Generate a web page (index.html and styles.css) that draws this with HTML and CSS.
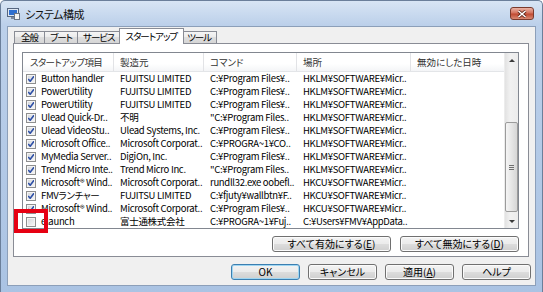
FILE: index.html
```html
<!DOCTYPE html>
<html>
<head>
    <meta charset="utf-8">
    <title>システム構成</title>
    <link rel="stylesheet" href="styles.css">
</head>
<body>
<div class="window">
    <div class="titlebar">
        <svg class="app-icon" width="13" height="12" viewBox="0 0 13 12">
            <rect x="0.5" y="0.5" width="11" height="8" fill="#dfe8f3" stroke="#56667f"/>
            <rect x="2" y="2" width="8" height="5" fill="#2f6fd0"/>
            <rect x="4" y="9" width="4" height="2" fill="#7d8ba0"/>
            <rect x="7.5" y="5.5" width="5" height="6" fill="#f4f4f4" stroke="#6d7685"/>
        </svg>
        <span class="title">システム構成</span>
        <div class="close-btn">
            <svg width="10" height="8" viewBox="0 0 10 8">
                <path d="M1.5 1 L8.5 7 M8.5 1 L1.5 7" stroke="#5a2216" stroke-width="3"/>
                <path d="M1.5 1 L8.5 7 M8.5 1 L1.5 7" stroke="#fff" stroke-width="1.6"/>
            </svg>
        </div>
    </div>

    <div class="client">
        <div class="tabs">
            <div class="tab">全般</div>
            <div class="tab">ブート</div>
            <div class="tab">サービス</div>
            <div class="tab active">スタートアップ</div>
            <div class="tab">ツール</div>
        </div>

        <div class="panel">
            <div class="listview">
                <div class="list-main">
                    <div class="row header">
                        <div class="col">スタートアップ項目</div>
                        <div class="col">製造元</div>
                        <div class="col">コマンド</div>
                        <div class="col">場所</div>
                        <div class="col">無効にした日時</div>
                    </div>
                    <div class="row">
                        <div class="col"><span class="cb on"></span>Button handler</div>
                        <div class="col">FUJITSU LIMITED</div>
                        <div class="col">C:¥Program Files¥..</div>
                        <div class="col">HKLM¥SOFTWARE¥Micr..</div>
                        <div class="col"></div>
                    </div>
                    <div class="row">
                        <div class="col"><span class="cb on"></span>PowerUtility</div>
                        <div class="col">FUJITSU LIMITED</div>
                        <div class="col">C:¥Program Files¥..</div>
                        <div class="col">HKLM¥SOFTWARE¥Micr..</div>
                        <div class="col"></div>
                    </div>
                    <div class="row">
                        <div class="col"><span class="cb on"></span>PowerUtility</div>
                        <div class="col">FUJITSU LIMITED</div>
                        <div class="col">C:¥Program Files¥..</div>
                        <div class="col">HKLM¥SOFTWARE¥Micr..</div>
                        <div class="col"></div>
                    </div>
                    <div class="row">
                        <div class="col"><span class="cb on"></span>Ulead Quick-Dr..</div>
                        <div class="col">不明</div>
                        <div class="col">"C:¥Program Files..</div>
                        <div class="col">HKLM¥SOFTWARE¥Micr..</div>
                        <div class="col"></div>
                    </div>
                    <div class="row">
                        <div class="col"><span class="cb on"></span>Ulead VideoStu..</div>
                        <div class="col">Ulead Systems, Inc.</div>
                        <div class="col">C:¥Program Files¥..</div>
                        <div class="col">HKLM¥SOFTWARE¥Micr..</div>
                        <div class="col"></div>
                    </div>
                    <div class="row">
                        <div class="col"><span class="cb on"></span>Microsoft Office..</div>
                        <div class="col">Microsoft Corporat..</div>
                        <div class="col">C:¥PROGRA~1¥CO..</div>
                        <div class="col">HKLM¥SOFTWARE¥Micr..</div>
                        <div class="col"></div>
                    </div>
                    <div class="row">
                        <div class="col"><span class="cb on"></span>MyMedia Server..</div>
                        <div class="col">DigiOn, Inc.</div>
                        <div class="col">C:¥Program Files¥..</div>
                        <div class="col">HKLM¥SOFTWARE¥Micr..</div>
                        <div class="col"></div>
                    </div>
                    <div class="row">
                        <div class="col"><span class="cb on"></span>Trend Micro Inte..</div>
                        <div class="col">Trend Micro Inc.</div>
                        <div class="col">"C:¥Program Files..</div>
                        <div class="col">HKLM¥SOFTWARE¥Micr..</div>
                        <div class="col"></div>
                    </div>
                    <div class="row">
                        <div class="col"><span class="cb on"></span>Microsoft® Wind..</div>
                        <div class="col">Microsoft Corporat..</div>
                        <div class="col">rundll32.exe oobefl..</div>
                        <div class="col">HKCU¥SOFTWARE¥Micr..</div>
                        <div class="col"></div>
                    </div>
                    <div class="row">
                        <div class="col"><span class="cb on"></span>FMVランチャー</div>
                        <div class="col">FUJITSU LIMITED</div>
                        <div class="col">C:¥fjuty¥wallbtn¥F..</div>
                        <div class="col">HKCU¥SOFTWARE¥Micr..</div>
                        <div class="col"></div>
                    </div>
                    <div class="row">
                        <div class="col"><span class="cb on"></span>Microsoft® Wind..</div>
                        <div class="col">Microsoft Corporat..</div>
                        <div class="col">C:¥Program Files¥..</div>
                        <div class="col">HKCU¥SOFTWARE¥Micr..</div>
                        <div class="col"></div>
                    </div>
                    <div class="row">
                        <div class="col"><span class="cb"></span>elaunch</div>
                        <div class="col">富士通株式会社</div>
                        <div class="col">C:¥PROGRA~1¥Fuj..</div>
                        <div class="col">C:¥Users¥FMV¥AppData..</div>
                        <div class="col"></div>
                    </div>
                </div>
                <div class="vscroll">
                    <div class="sb-btn"><span class="arrow up"></span></div>
                    <div class="sb-track">
                        <div class="sb-thumb"><span class="grip"></span></div>
                    </div>
                    <div class="sb-btn"><span class="arrow down"></span></div>
                </div>
            </div>

            <div class="panel-buttons">
                <button class="btn wide">すべて有効にする(<u>E</u>)</button>
                <button class="btn wide">すべて無効にする(<u>D</u>)</button>
            </div>
        </div>

        <div class="dialog-buttons">
            <button class="btn default">OK</button>
            <button class="btn">キャンセル</button>
            <button class="btn">適用(<u>A</u>)</button>
            <button class="btn">ヘルプ</button>
        </div>
    </div>

    <div class="highlight"></div>
</div>
</body>
</html>
```

FILE: styles.css
```css
body {
    margin: 0;
    font-family: "Noto Sans CJK JP", sans-serif;
    font-size: 9.5px;
    font-feature-settings: "palt";
    color: #000;
}
.window {
    position: relative;
    width: 543px;
    height: 292px;
    box-sizing: border-box;
    border: 1px solid #6b7f9a;
    border-bottom: none;
    border-radius: 5px 5px 0 0;
    background: linear-gradient(#d8e5f4, #bcd0ea 24px, #aac3e3);
    display: flex;
    flex-direction: column;
}
.titlebar {
    height: 25px;
    display: flex;
    align-items: center;
    padding-left: 6px;
}
.app-icon {
    margin-top: 1px;
}
.title {
    margin-left: 5px;
    font-size: 11px;
    letter-spacing: -0.5px;
    color: #111;
}
.close-btn {
    margin-left: auto;
    margin-right: 8px;
    align-self: flex-start;
    margin-top: 6px;
    width: 24px;
    height: 13px;
    box-sizing: border-box;
    border: 1px solid #7a3a2c;
    border-radius: 3px;
    background: linear-gradient(#eab3a5, #d4735e 45%, #c04a32 55%, #d88a74);
    display: flex;
    align-items: center;
    justify-content: center;
}
.client {
    flex: 1;
    margin: 0 6px 6px 6px;
    background: #f0f0f0;
    border: 1px solid #8c9fb9;
    display: flex;
    flex-direction: column;
}
.tabs {
    display: flex;
    align-items: flex-end;
    height: 15px;
    margin-top: 1px;
    padding-left: 6px;
}
.tab {
    height: 11px;
    line-height: 11px;
    padding: 0 5px;
    letter-spacing: -1px;
    border: 1px solid #898c95;
    border-bottom: none;
    margin-left: -1px;
    background: linear-gradient(#f5f5f5, #ebebeb 50%, #dedede 50%, #d6d6d6);
    white-space: nowrap;
}
.tab:first-child {
    margin-left: 0;
    padding: 0 6px;
}
.tab.active {
    position: relative;
    z-index: 1;
    height: 15px;
    line-height: 14px;
    margin: 0 -2px -1px -2px;
    padding: 0 6px;
    background: #fff;
}
.panel {
    height: 214px;
    box-sizing: border-box;
    margin: 0 6px 0 5px;
    border: 1px solid #898c95;
    background: #fff;
    padding: 8px 9px 0 8px;
}
.listview {
    display: flex;
    height: 177px;
    box-sizing: border-box;
    border: 1px solid #828790;
}
.list-main {
    flex: 1;
    min-width: 0;
}
.row {
    display: grid;
    grid-template-columns: 91px 90px 93px 114px 1fr;
    height: 13px;
    line-height: 13px;
    letter-spacing: -0.3px;
}
.col {
    padding-left: 6px;
    white-space: nowrap;
    overflow: hidden;
}
.row .col:first-child {
    padding-left: 3px;
    display: flex;
    align-items: center;
}
.header {
    height: 19px;
    line-height: 18px;
    letter-spacing: 0;
    background: linear-gradient(#fff, #fff 60%, #f4f5f7);
    border-bottom: 1px solid #e3e5e8;
    box-sizing: border-box;
    color: #333;
}
.header .col {
    border-right: 1px solid #e2e3e6;
}
.header .col:first-child {
    padding-left: 7px;
    display: block;
    letter-spacing: -0.6px;
}
.header .col:last-child {
    border-right: none;
}
.cb {
    width: 10px;
    height: 10px;
    box-sizing: border-box;
    border: 1px solid #8e8f8f;
    margin-right: 5px;
    flex: none;
    background: linear-gradient(135deg, #d3d6da, #f7f7f7);
    box-shadow: inset 0 0 0 1px #f4f4f4;
}
.cb.on {
    background:
        url("data:image/svg+xml,%3Csvg xmlns='http://www.w3.org/2000/svg' width='8' height='8' viewBox='0 0 8 8'%3E%3Cpath d='M1.2 4 L3.2 6.2 L7 1.2' fill='none' stroke='%232d4fa6' stroke-width='1.6'/%3E%3C/svg%3E") center / 8px 8px no-repeat,
        linear-gradient(135deg, #d3d6da, #f7f7f7);
}
.vscroll {
    width: 13px;
    display: flex;
    flex-direction: column;
    background: linear-gradient(to right, #e2e2e2, #f1f1f1 40%, #ececec);
    border-left: 1px solid #ececec;
}
.sb-btn {
    height: 14px;
    display: flex;
    align-items: center;
    justify-content: center;
}
.arrow {
    width: 0;
    height: 0;
    border-left: 3px solid transparent;
    border-right: 3px solid transparent;
}
.arrow.up {
    border-bottom: 3px solid #3a3a3a;
}
.arrow.down {
    border-top: 3px solid #3a3a3a;
}
.sb-track {
    flex: 1;
}
.sb-thumb {
    margin: 55px 0 0 0;
    height: 90px;
    box-sizing: border-box;
    border: 1px solid #9b9b9b;
    border-radius: 2px;
    background: linear-gradient(to right, #f5f5f5, #e6e6e6 50%, #d6d6d6);
    display: flex;
    align-items: center;
    justify-content: center;
}
.grip {
    width: 5px;
    height: 5px;
    background: repeating-linear-gradient(#6f6f6f 0, #6f6f6f 1px, transparent 1px, transparent 2px);
}
.panel-buttons {
    display: flex;
    justify-content: flex-end;
    gap: 9px;
    margin-top: 7px;
}
.dialog-buttons {
    display: flex;
    justify-content: flex-end;
    gap: 8px;
    margin-top: 7px;
    padding-right: 4px;
}
.btn {
    width: 69px;
    height: 16px;
    padding: 0;
    font-family: inherit;
    font-size: 10px;
    font-feature-settings: "palt";
    line-height: 14px;
    color: #000;
    border: 1px solid #707070;
    border-radius: 3px;
    background: linear-gradient(#f3f3f3, #ebebeb 50%, #dddddd 50%, #cfcfcf);
    box-shadow: inset 0 0 0 1px #fbfbfb;
}
.btn.wide {
    width: 119px;
}
.btn.default {
    border-color: #3c7fb1;
    box-shadow: inset 0 0 0 1px #9fd6f2;
}
.btn u {
    text-decoration: underline;
}
.highlight {
    position: absolute;
    left: 13px;
    top: 208px;
    width: 34px;
    height: 24px;
    box-sizing: border-box;
    border: 4px solid #e60012;
}
```
